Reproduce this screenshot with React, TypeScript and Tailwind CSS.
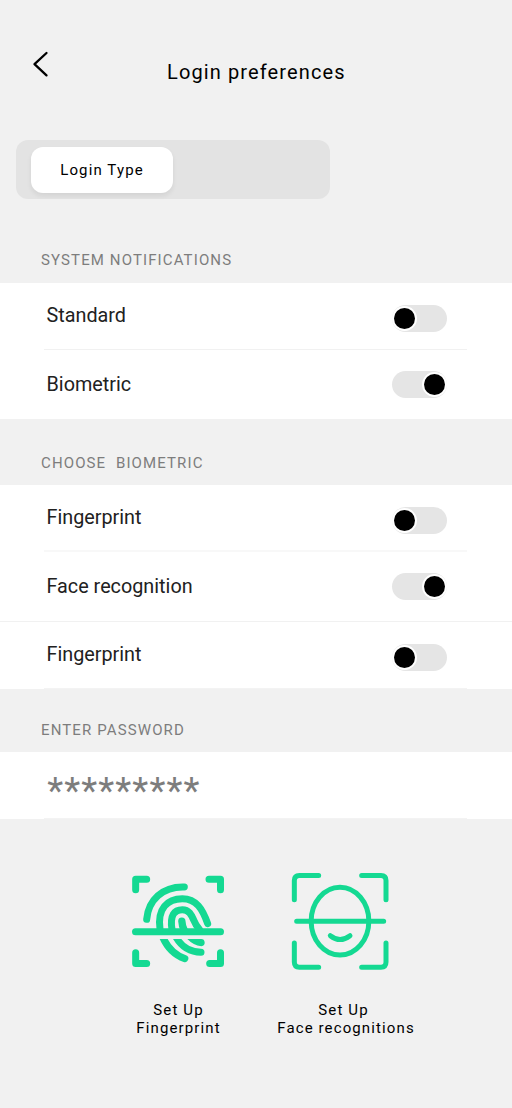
import { useState, type ReactNode } from "react";

function Toggle({ initial }: { initial: boolean }) {
  const [on, setOn] = useState(initial);
  return (
    <button
      type="button"
      role="switch"
      aria-checked={on}
      onClick={() => setOn(!on)}
      className={`flex h-[27px] w-[55px] items-center rounded-full bg-[#e5e5e5] ${on ? "justify-end" : "justify-start"}`}
    >
      <span className="size-[25px] rounded-full bg-white p-[2px]">
        <span className="block size-[21px] rounded-full bg-black" />
      </span>
    </button>
  );
}

function SectionTitle({ children, className }: { children: ReactNode; className: string }) {
  return (
    <h2 className={`pl-[41px] text-[15px] leading-5 tracking-[1.120px] whitespace-pre text-[#7d7d7d] ${className}`}>{children}</h2>
  );
}

function Row({ label, on, className, toggleClass }: { label: string; on: boolean; className: string; toggleClass: string }) {
  return (
    <div className={`flex items-start justify-between pr-[65px] pl-[46.5px] ${className}`}>
      <span className="pt-px text-[19.800px] leading-6 text-[#212121]">{label}</span>
      <span className={toggleClass}>
        <Toggle initial={on} />
      </span>
    </div>
  );
}

function FingerprintIcon() {
  return (
    <svg width="116" height="112" viewBox="0 0 348 336" fill="none" stroke="#14d992" strokeWidth="21" strokeLinecap="round">
      <path d="M80 42.500H47V74M267 42.500H301.500V74M47 263V295.500H80M269 295.500H301.500V263" strokeLinejoin="round" />
      <path d="M46.500 200.500H301.500" />
      <path d="M80 163C85 105 128 64 193 66" />
      <path d="M120 193C111 130 143 101 187 101C229 101 248 133 263 176" />
      <path d="M156 194C149 151 163 134 187 134C207 134 214 149 221 165Q227 180 238 193" />
      <path d="M185.500 168.500Q186 182 193 196" strokeWidth="22" />
      <path d="M119 222H143Q161 257 198 271A10 10 0 0 1 191 291Q142 274 119 222Z" fill="#14d992" stroke="none" />
      <path d="M159 222H184Q205 251 243 251A10.500 10.500 0 0 1 243 272Q189 272 159 222Z" fill="#14d992" stroke="none" />
      <path d="M202 222H242A11 11 0 0 1 244 244Q220 241 202 222Z" fill="#14d992" stroke="none" />
    </svg>
  );
}

function FaceIcon() {
  return (
    <svg width="116" height="112" viewBox="0 0 348 336" fill="none" stroke="#14d992" strokeWidth="15" strokeLinecap="round">
      <path d="M110 31.500H52Q37 31.500 37 46.500V104M239 31.500H297Q312 31.500 312 46.500V104M37 234V291Q37 306.500 52 306.500H110M239 306.500H297Q312 306.500 312 291V234" />
      <ellipse cx="174" cy="168.500" rx="86.500" ry="101.500" />
      <path d="M44 169H305M145 212Q174 235 204 212" />
    </svg>
  );
}

export default function App() {
  return (
    <main className="flex h-[1108px] w-[512px] flex-col overflow-hidden bg-[#f1f1f1] font-['Roboto',sans-serif]">
      <header className="flex h-[140px] items-start">
        <button type="button" aria-label="Back" className="mt-[50px] ml-[30px]">
          <svg width="20" height="28" viewBox="0 0 20 28" fill="none" stroke="black" strokeWidth="2.300" strokeLinecap="round" strokeLinejoin="round">
            <path d="M16.500 3L4.500 14.200L16.500 25.400" />
          </svg>
        </button>
        <h1 className="mt-[60px] ml-[117px] text-[20px] leading-6 tracking-[1.120px] whitespace-nowrap text-black">Login preferences</h1>
      </header>

      <div className="ml-4 flex h-[59px] w-[314px] shrink-0 items-start rounded-[12px] bg-[#e3e3e3] pt-[7px] pl-[15px]">
        <button type="button" className="h-[46px] w-[142px] rounded-[12px] bg-white text-[15px] leading-5 tracking-[1.120px] text-black shadow-[0_3px_5px_rgba(0,0,0,0.07)]">
          Login Type
        </button>
      </div>

      <SectionTitle className="mt-[51px] mb-[13px]">SYSTEM NOTIFICATIONS</SectionTitle>
      <section className="flex h-[136px] flex-col bg-white">
        <Row label="Standard" on={false} className="h-[66px] pt-[20px]" toggleClass="mt-[2.400px]" />
        <div className="mr-[45px] ml-[44px] h-px bg-[#f1f1f1]" />
        <Row label="Biometric" on className="h-[69px] pt-[22px]" toggleClass="-mt-[0.700px]" />
      </section>

      <SectionTitle className="mt-[34px] mb-[12px]">CHOOSE  BIOMETRIC</SectionTitle>
      <section className="flex h-[204px] flex-col bg-white">
        <Row label="Fingerprint" on={false} className="h-[65px] pt-[20px]" toggleClass="mt-[2px]" />
        <div className="mr-[45px] ml-[44px] h-[2px] bg-[#f8f8f8]" />
        <Row label="Face recognition" on className="h-[69px] pt-[22px]" toggleClass="-mt-[1.300px]" />
        <div className="h-px bg-[#f1f1f1]" />
        <Row label="Fingerprint" on={false} className="h-[66px] pt-[20px]" toggleClass="mt-[2px]" />
        <div className="mr-[45px] ml-[44px] h-px bg-[#f3f3f3]" />
      </section>

      <SectionTitle className="mt-[31px] mb-[12px]">ENTER PASSWORD</SectionTitle>
      <section className="flex h-[67px] flex-col bg-white">
        <div className="h-[66px] pt-[17px] pl-[47.200px] text-[37px] leading-[43px] tracking-[1.100px] text-[#7d7d7d]">*********</div>
        <div className="mr-[45px] ml-[44px] h-px bg-[#f3f3f3]" />
      </section>

      <div className="mt-[46px] flex">
        <button type="button" className="ml-[108px] flex w-[140px] flex-col items-center">
          <FingerprintIcon />
          <span className="mt-[25px] ml-px text-[15px] leading-[17.500px] tracking-[1.120px] text-black">
            Set Up
            <br />
            Fingerprint
          </span>
        </button>
        <button type="button" className="ml-[18px] flex w-[160px] flex-col items-center">
          <span className="-ml-[12px]">
            <FaceIcon />
          </span>
          <span className="mt-[25px] text-[15px] leading-[17.500px] tracking-[1.120px] whitespace-nowrap text-black">
            <span className="mr-[5px]">Set Up</span>
            <br />
            Face recognitions
          </span>
        </button>
      </div>
    </main>
  );
}
